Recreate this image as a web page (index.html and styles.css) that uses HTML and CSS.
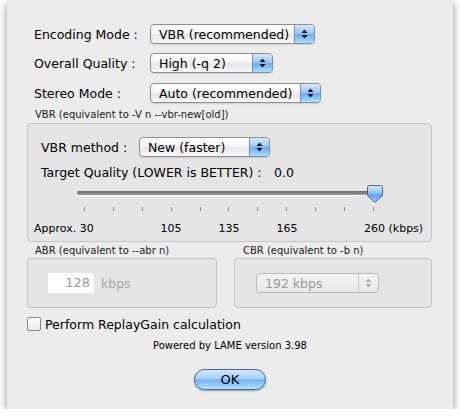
FILE: index.html
```html
<!DOCTYPE html>
<html>
<head>
<meta charset="utf-8">
<link rel="stylesheet" href="styles.css">
</head>
<body>
<div class="sheet">
  <div class="row r1">
    <span class="lbl">Encoding Mode :</span>
    <div class="popup w-enc"><span class="ptext">VBR (recommended)</span><span class="arrows"><svg width="7" height="10" viewBox="0 0 7 10"><path d="M3.5 0.5 L6.5 4 H0.5 Z M3.5 9.5 L6.5 6 H0.5 Z" fill="#111"/></svg></span></div>
  </div>
  <div class="row r2">
    <span class="lbl">Overall Quality :</span>
    <div class="popup w-q"><span class="ptext">High (-q 2)</span><span class="arrows"><svg width="7" height="10" viewBox="0 0 7 10"><path d="M3.5 0.5 L6.5 4 H0.5 Z M3.5 9.5 L6.5 6 H0.5 Z" fill="#111"/></svg></span></div>
  </div>
  <div class="row r3">
    <span class="lbl">Stereo Mode :</span>
    <div class="popup w-st"><span class="ptext">Auto (recommended)</span><span class="arrows"><svg width="7" height="10" viewBox="0 0 7 10"><path d="M3.5 0.5 L6.5 4 H0.5 Z M3.5 9.5 L6.5 6 H0.5 Z" fill="#111"/></svg></span></div>
  </div>

  <div class="caption cap-vbr">VBR (equivalent to -V n --vbr-new[old])</div>
  <div class="group vbr">
    <div class="row mrow">
      <span class="lbl2">VBR method :</span>
      <div class="popup w-m"><span class="ptext">New (faster)</span><span class="arrows"><svg width="7" height="10" viewBox="0 0 7 10"><path d="M3.5 0.5 L6.5 4 H0.5 Z M3.5 9.5 L6.5 6 H0.5 Z" fill="#111"/></svg></span></div>
    </div>
    <div class="tq"><span class="tq-lbl">Target Quality (LOWER is BETTER) :</span><span class="tq-val">0.0</span></div>
    <div class="slider">
      <div class="track"></div>
      <svg class="knob" width="18" height="20" viewBox="0 0 18 20">
        <defs>
          <linearGradient id="kg" x1="0" y1="0" x2="0" y2="1">
            <stop offset="0" stop-color="#d6e9fd"/>
            <stop offset="0.45" stop-color="#8fc0f4"/>
            <stop offset="0.55" stop-color="#5ea3ee"/>
            <stop offset="1" stop-color="#9fd0fb"/>
          </linearGradient>
        </defs>
        <path d="M1.5 3.5 Q1.5 1.5 3.5 1.5 H14.5 Q16.5 1.5 16.5 3.5 V11.5 L9 18.5 L1.5 11.5 Z" fill="url(#kg)" stroke="#41649c" stroke-width="1"/>
      </svg>
    </div>
    <div class="ticks">
      <i></i><i></i><i></i><i></i><i></i><i></i><i></i><i></i><i></i><i></i><i></i>
    </div>
    <div class="tlabels">
      <span class="tl tl-a">Approx. 30</span>
      <span class="tl tl-c" style="left:143px">105</span>
      <span class="tl tl-c" style="left:201px">135</span>
      <span class="tl tl-c" style="left:259px">165</span>
      <span class="tl tl-e">260 (kbps)</span>
    </div>
  </div>

  <div class="pair">
    <div class="col abr">
      <div class="caption cap-abr">ABR (equivalent to --abr n)</div>
      <div class="group gsmall abr-box">
        <span class="field">128</span><span class="unit">kbps</span>
      </div>
    </div>
    <div class="col cbr">
      <div class="caption cap-cbr">CBR (equivalent to -b n)</div>
      <div class="group gsmall cbr-box">
        <div class="popup disabled w-cbr"><span class="ptext">192 kbps</span><span class="arrows"><svg width="7" height="10" viewBox="0 0 7 10"><path d="M3.5 0.5 L6.5 4 H0.5 Z M3.5 9.5 L6.5 6 H0.5 Z" fill="#aaa"/></svg></span></div>
      </div>
    </div>
  </div>

  <div class="check"><span class="cbox"></span><span>Perform ReplayGain calculation</span></div>
  <div class="powered">Powered by LAME version 3.98</div>
  <div class="okrow"><div class="ok">OK</div></div>
</div>
</body>
</html>
```

FILE: styles.css
```css
html, body {
  margin: 0;
  padding: 0;
  background: #ffffff;
}
body {
  font-family: "DejaVu Sans", "Liberation Sans", sans-serif;
  font-size: 12.5px;
  color: #000;
}
.sheet {
  box-sizing: border-box;
  width: 446px;
  height: 409px;
  margin-left: 7px;
  background: #ececec;
  box-shadow: 0 3px 8px rgba(0, 0, 0, 0.45);
  padding: 24px 0 0 20px;
}
.row {
  display: flex;
  align-items: center;
  height: 20px;
}
.r1 { margin-bottom: 9px; }
.r2 { margin-bottom: 10px; }
.lbl {
  padding-left: 7px;
  box-sizing: border-box;
  width: 123px;
}
.popup {
  box-sizing: border-box;
  height: 20px;
  display: flex;
  align-items: center;
  border: 1px solid #8e8e8e;
  border-radius: 4px;
  background: linear-gradient(#ffffff 0%, #f6f6f6 45%, #e6e6e6 55%, #f7f7f7 100%);
  box-shadow: 0 1px 1px rgba(0,0,0,0.12);
  overflow: hidden;
}
.ptext {
  flex: 1;
  padding-left: 8px;
  white-space: nowrap;
}
.arrows {
  width: 19px;
  height: 100%;
  display: flex;
  align-items: center;
  justify-content: center;
  border-left: 1px solid #6f8fc0;
  background: linear-gradient(#d4e8fc 0%, #9ccaf7 45%, #6aacf0 55%, #aee0fd 100%);
}
.w-enc { width: 165px; }
.w-q { width: 123px; }
.w-st { width: 171px; }
.w-m { width: 131px; }
.w-cbr { width: 123px; }

.caption {
  font-size: 10px;
  color: #222;
  height: 14px;
  line-height: 14px;
}
.cap-vbr {
  margin-top: 5px;
  margin-bottom: 1px;
  padding-left: 8px;
}
.group {
  box-sizing: border-box;
  border: 1px solid #c3c3c3;
  border-radius: 4px;
  background: #e5e5e5;
}
.vbr {
  width: 405px;
  height: 119px;
  padding-top: 13px;
  position: relative;
}
.mrow { padding-left: 13px; }
.lbl2 { width: 98px; }
.tq {
  margin-top: 8px;
  height: 16px;
  line-height: 16px;
  padding-left: 13px;
  display: flex;
}
.tq-lbl { width: 233px; }
.slider {
  position: relative;
  margin: 3px 0 0 49px;
  width: 298px;
  height: 22px;
}
.track {
  position: absolute;
  left: 0;
  right: 0;
  top: 7px;
  height: 4px;
  border-radius: 2px;
  background: linear-gradient(#6a6a6a, #9a9a9a);
  box-shadow: 0 1px 0 #fff;
}
.knob {
  position: absolute;
  right: -9px;
  top: 0;
}
.ticks {
  margin-left: 56px;
  width: 290px;
  height: 5px;
  margin-top: 1px;
  display: flex;
  justify-content: space-between;
}
.ticks i {
  display: block;
  width: 1px;
  height: 4px;
  background: #8a8a8a;
}
.tlabels {
  position: relative;
  height: 16px;
  margin-top: 9px;
  font-size: 11px;
  line-height: 16px;
}
.tl { position: absolute; top: 0; white-space: nowrap; }
.tl-a { left: 6px; }
.tl-c { transform: translateX(-50%); }
.tl-e { left: 336px; }

.pair {
  display: flex;
  gap: 17px;
  margin-top: 2px;
}
.cap-abr { padding-left: 8px; }
.cap-cbr { padding-left: 9px; }
.gsmall {
  height: 50px;
  display: flex;
  align-items: center;
}
.abr-box { width: 190px; padding-left: 20px; }
.cbr-box { width: 198px; padding-left: 21px; }
.field {
  box-sizing: border-box;
  width: 46px;
  height: 20px;
  line-height: 20px;
  background: #fff;
  color: #9a9a9a;
  text-align: right;
  padding-right: 4px;
  font-size: 13px;
}
.unit {
  margin-left: 7px;
  color: #a8a8a8;
}
.popup.disabled {
  border-color: #b9b9b9;
  background: linear-gradient(#f4f4f4, #e9e9e9);
  box-shadow: none;
  color: #9a9a9a;
}
.popup.disabled .arrows {
  background: transparent;
  border-left: 1px solid #c9c9c9;
}
.check {
  display: flex;
  align-items: center;
  height: 16px;
  margin-top: 8px;
}
.cbox {
  box-sizing: border-box;
  width: 14px;
  height: 14px;
  border: 1px solid #8a8a8a;
  border-radius: 2px;
  background: linear-gradient(#ffffff, #e8e8e8);
  margin-right: 4px;
}
.powered {
  text-align: center;
  font-size: 10px;
  margin-top: 7px;
  height: 14px;
  line-height: 14px;
  padding-right: 20px;
}
.okrow {
  display: flex;
  justify-content: center;
  padding-right: 20px;
  margin-top: 16px;
}
.ok {
  box-sizing: border-box;
  width: 72px;
  height: 21px;
  line-height: 19px;
  text-align: center;
  border: 1px solid #3f66a3;
  border-radius: 11px;
  background: linear-gradient(#d2e7fc 0%, #a5cff7 45%, #73b3f1 55%, #b6e2fe 100%);
  box-shadow: 0 1px 2px rgba(0,0,0,0.35);
  font-size: 13px;
}
```
